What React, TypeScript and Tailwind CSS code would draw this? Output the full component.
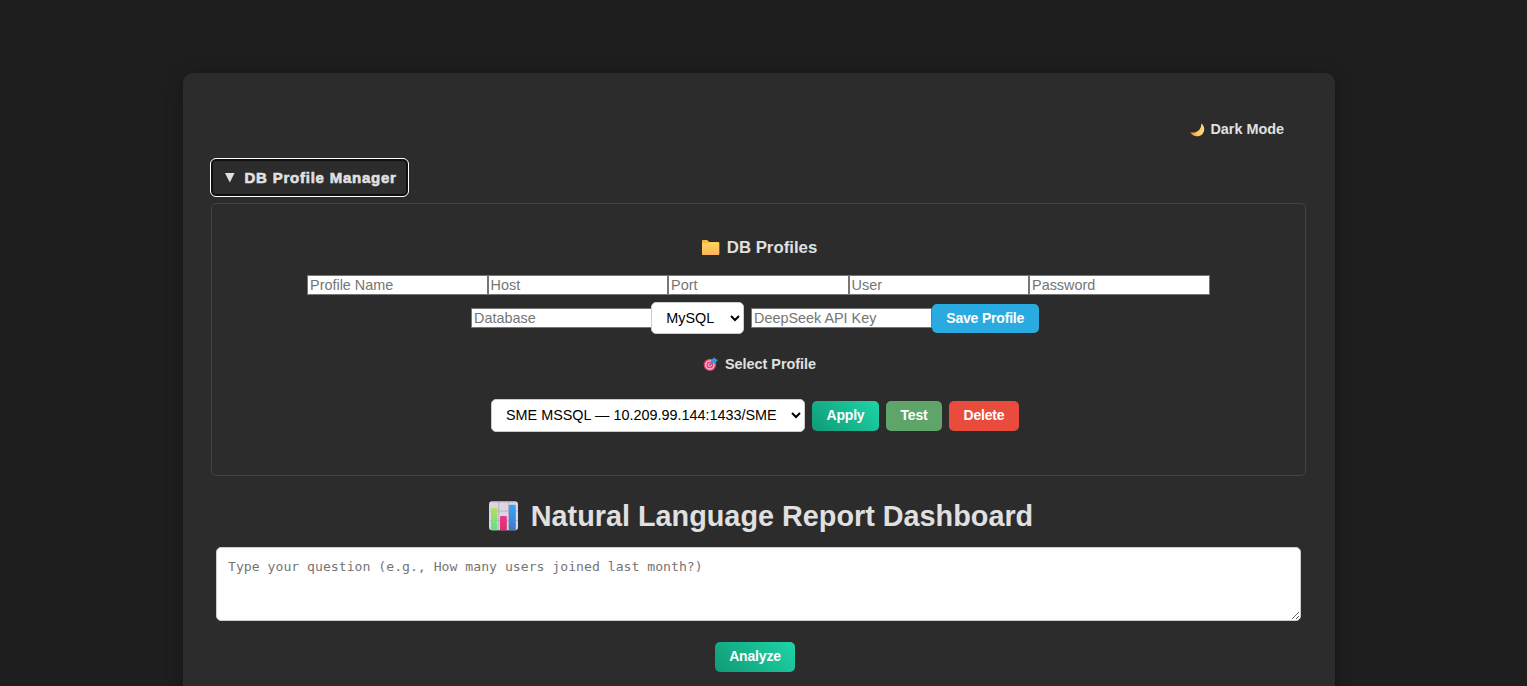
import type { ReactNode } from 'react';

const Moon = () => (
  <svg width="15" height="14" viewBox="0 0 15 14" aria-hidden="true">
    <defs>
      <linearGradient id="moon" x1="0" y1="0" x2="1" y2="0">
        <stop offset="0" stopColor="#f08a3c" />
        <stop offset=".55" stopColor="#ffc65c" />
        <stop offset="1" stopColor="#ffd98a" />
      </linearGradient>
    </defs>
    <path d="M11.2.6C14.8 2.8 15.2 8.2 12.3 11.2 8.8 14.5 2.6 13.8.3 9.2 5.5 10.6 11.6 7.6 11.2.6Z" fill="url(#moon)" />
  </svg>
);

const Folder = () => (
  <svg width="18" height="16" viewBox="0 0 18 16" aria-hidden="true">
    <defs>
      <linearGradient id="folder" x1="0" y1="0" x2="0" y2="1">
        <stop offset="0" stopColor="#ffd65c" />
        <stop offset="1" stopColor="#ffb25a" />
      </linearGradient>
    </defs>
    <path d="M0 1Q0 0 1 0H5.2L7.2 2H16.2Q17.2 2 17.2 3V14Q17.2 15 16.2 15H1Q0 15 0 14Z" fill="#f5b840" />
    <path d="M0 3.2H5.4L7.2 2.2H16.4Q17.2 2.2 17.2 3V14Q17.2 15 16.2 15H1Q0 15 0 14Z" fill="url(#folder)" />
  </svg>
);

const Target = () => (
  <svg width="15" height="15" viewBox="0 0 15 15" className="mb-0.5" aria-hidden="true">
    <circle cx="6.9" cy="7.9" r="6.2" fill="#e83f6f" />
    <circle cx="6.9" cy="7.9" r="4.1" fill="none" stroke="#f0c8d8" strokeWidth="1.3" />
    <circle cx="6.9" cy="7.9" r="1.5" fill="none" stroke="#f0c8d8" strokeWidth="1" />
    <path d="M6.9 7.9 11 3.8" stroke="#4a5a80" strokeWidth="1.2" />
    <path d="M8 6V3.2L11.4.2 12.2 1.8 15 3.1 11.9 6.4H9.2Z" fill="#3c94d8" />
  </svg>
);

const BarChart = () => (
  <svg width="30" height="30" viewBox="0 0 30 30" aria-hidden="true">
    <defs>
      <linearGradient id="green" x1="0" y1="0" x2="0" y2="1">
        <stop offset="0" stopColor="#b5e05a" />
        <stop offset="1" stopColor="#5fe08c" />
      </linearGradient>
      <linearGradient id="pink" x1="0" y1="0" x2="0" y2="1">
        <stop offset="0" stopColor="#f0358f" />
        <stop offset="1" stopColor="#d7306a" />
      </linearGradient>
      <linearGradient id="blue" x1="0" y1="0" x2="0" y2="1">
        <stop offset="0" stopColor="#36a6f8" />
        <stop offset="1" stopColor="#3f78cc" />
      </linearGradient>
    </defs>
    <rect x="0" y=".3" width="29" height="29" rx="3.2" fill="#dcd5e3" />
    <path d="M1 10H29M1 19.5H29M9.8 1V29M19.5 1V29" stroke="#b9b1c2" strokeWidth="1" />
    <path d="M3 .8H26" stroke="#aaa5ae" strokeWidth="1" />
    <path d="M2 8.2Q2 7 3.2 7H7.2Q8.4 7 8.4 8.2V29.3H3Q2 29 2 28Z" fill="url(#green)" />
    <path d="M11 16.2Q11 15 12.2 15H16.6Q17.8 15 17.8 16.2V29.3H11Z" fill="url(#pink)" />
    <path d="M20 5Q20 3.8 21.2 3.8H25.6Q26.8 3.8 26.8 5V29.3H20Z" fill="url(#blue)" />
  </svg>
);

const Field = ({ label, type = 'text' }: { label: string; type?: string }) => (
  <input
    type={type}
    placeholder={label}
    className="h-5 w-[180.5px] shrink-0 border border-[#767676] bg-white px-[1.8px] text-[14.4px] leading-4 text-black placeholder:text-[#757575] focus:outline-none"
  />
);

const Action = ({ children, className }: { children: ReactNode; className: string }) => (
  <button className={`flex shrink-0 items-center justify-center rounded-[5px] text-[14px] font-bold leading-4 tracking-[-0.19px] text-white ${className}`}>
    {children}
  </button>
);

const selectStyle =
  'shrink-0 rounded-[5px] border border-[#ccc] bg-white pl-[10px] pr-0 text-[14.4px] text-black focus:outline-none';

export default function App() {
  return (
    <div className="h-[686px] overflow-hidden bg-[#1e1e1e] pl-[183px] pt-[73px] font-['Liberation_Sans',Arial,sans-serif] text-[#e0e0e0]">
      <main className="flex h-[760px] w-[1152px] flex-col rounded-[10px] bg-[#2c2c2c] pl-7 pr-[29px] pt-12 shadow-[0_4px_18px_rgba(0,0,0,0.3)]">
        <div className="mr-[22px] flex h-[18px] items-center justify-end gap-[5px] text-[14.4px] font-bold">
          <Moon />
          <span>Dark Mode</span>
        </div>

        <button className="-ml-px mt-[19px] flex h-[39px] w-[199px] shrink-0 items-center rounded-[6px] border border-white pl-3.5 shadow-[inset_0_0_0_2px_#101010]">
          <svg width="10" height="10" viewBox="0 0 10 10" aria-hidden="true">
            <path d="M0 0H9.6L4.8 9.4Z" fill="#e0e0e0" />
          </svg>
          <span className="ml-[9.5px] whitespace-nowrap pt-0.5 text-[15px] font-bold tracking-[0.77px] [-webkit-text-stroke:0.6px_#e0e0e0]">DB Profile Manager</span>
        </button>

        <section className="mt-1.5 flex h-[273px] shrink-0 flex-col items-center rounded-[5px] border border-[#444] pt-[34px]">
          <h3 className="ml-0.5 flex h-5 items-center gap-[7px] text-[16.8px] font-bold">
            <Folder />
            DB Profiles
          </h3>

          <div className="mt-[17px] flex">
            <Field label="Profile Name" />
            <Field label="Host" />
            <Field label="Port" />
            <Field label="User" />
            <Field label="Password" type="password" />
          </div>

          <div className="mr-[7px] mt-[7px] flex h-8 items-center">
            <Field label="Database" />
            <select className={`${selectStyle} -ml-[0.6px] mr-[7px] h-8 w-[93px]`}>
              <option>MySQL</option>
            </select>
            <Field label="DeepSeek API Key" />
            <Action className="h-[29px] w-[107px] bg-[#29abe2]">Save Profile</Action>
          </div>

          <h4 className="ml-0.5 mt-[22px] flex h-[18px] items-center gap-[7px] text-[14.4px] font-bold">
            <Target />
            Select Profile
          </h4>

          <div className="mr-[7px] mt-[25px] flex h-[33px] items-center gap-[7px]">
            <select className={`${selectStyle} h-[33px] w-[314px] pb-px`}>
              <option>SME MSSQL — 10.209.99.144:1433/SME</option>
            </select>
            <Action className="h-[30px] w-[67px] bg-linear-[45deg,#119a75,#1dd5a8] pb-px">Apply</Action>
            <Action className="h-[30px] w-14 bg-[#5fa56a] pb-px">Test</Action>
            <Action className="h-[30px] w-[70px] bg-[#e94b3c] pb-px">Delete</Action>
          </div>
        </section>

        <h1 className="mr-[-5px] mt-[23px] flex h-[34px] shrink-0 items-center justify-center gap-3 text-[28.8px] font-bold leading-[34px]">
          <BarChart />
          Natural Language Report Dashboard
        </h1>

        <textarea
          placeholder="Type your question (e.g., How many users joined last month?)"
          className="mx-[5px] mt-3.5 block h-[74px] shrink-0 resize rounded-[5px] border border-[#ccc] bg-white px-[11px] py-[11px] font-['DejaVu_Sans_Mono',monospace] text-[13.15px] leading-4 text-black placeholder:text-[#757575] focus:outline-none"
        />

        <div className="mr-[7px] mt-[21px] flex justify-center">
          <Action className="h-[30px] w-20 bg-linear-[45deg,#119a75,#1dd5a8] pb-0.5">Analyze</Action>
        </div>
      </main>
    </div>
  );
}
